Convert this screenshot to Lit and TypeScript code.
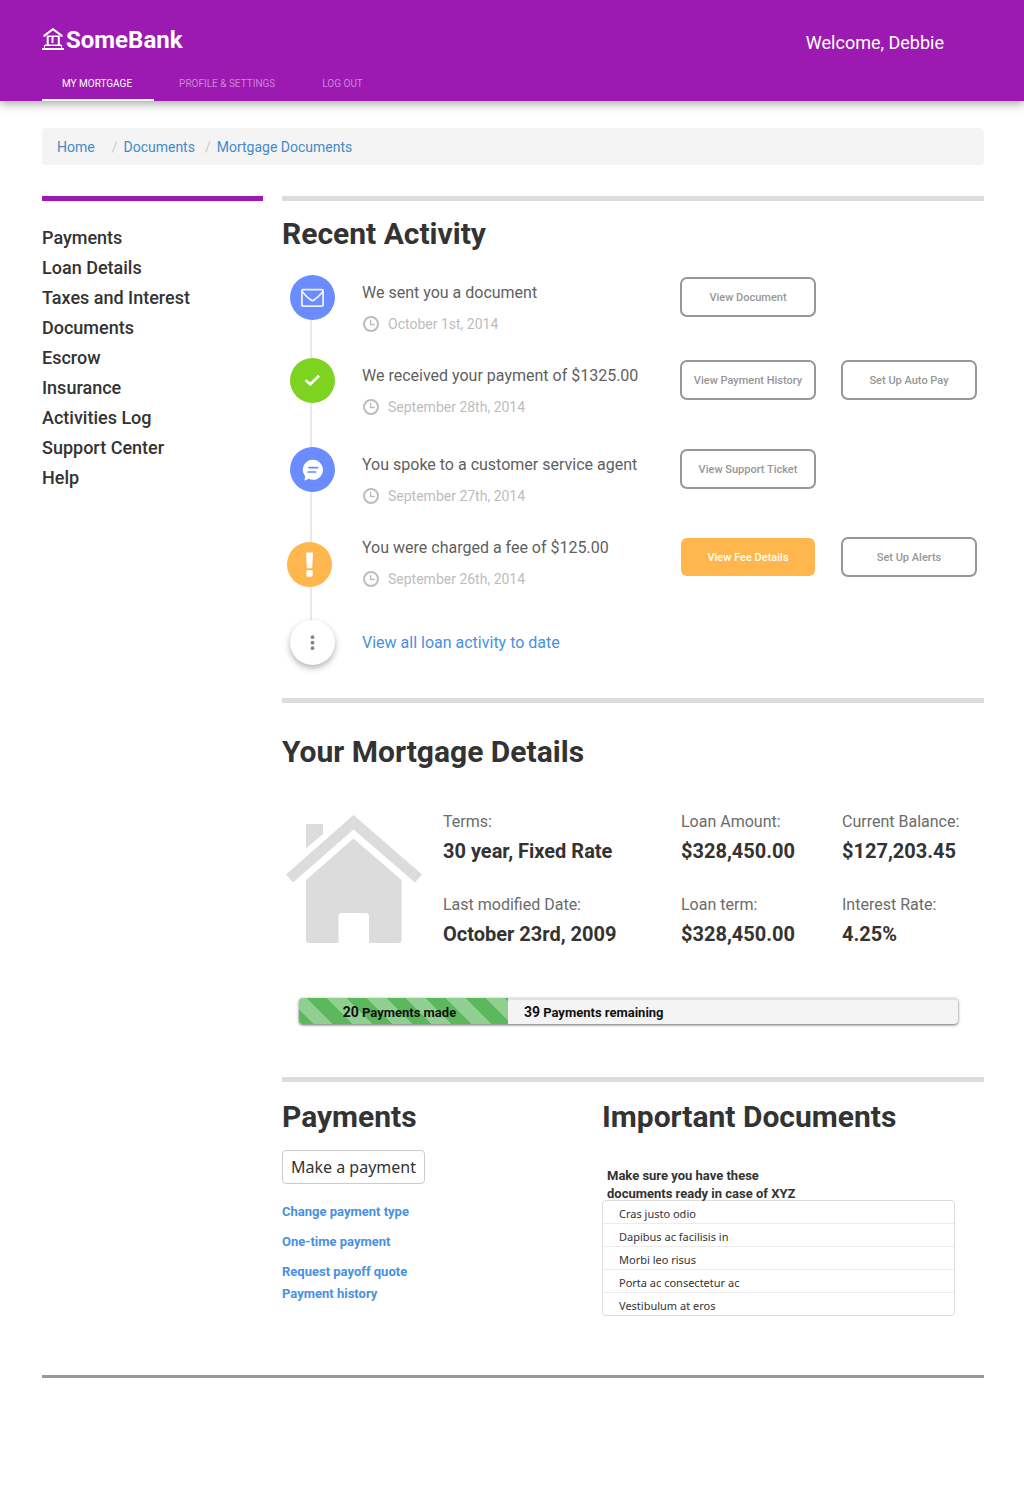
import { LitElement, html, css, svg, TemplateResult } from "lit";
import { customElement, property } from "lit/decorators.js";
import { classMap } from "lit/directives/class-map.js";

type Kind = "mail" | "check" | "chat" | "alert" | "more";

interface Activity {
  kind: Kind;
  title: string;
  date: string;
  actions: { label: string; primary?: boolean }[];
}

const activities: Activity[] = [
  { kind: "mail", title: "We sent you a document", date: "October 1st, 2014", actions: [{ label: "View Document" }] },
  {
    kind: "check",
    title: "We received your payment of $1325.00",
    date: "September 28th, 2014",
    actions: [{ label: "View Payment History" }, { label: "Set Up Auto Pay" }],
  },
  {
    kind: "chat",
    title: "You spoke to a customer service agent",
    date: "September 27th, 2014",
    actions: [{ label: "View Support Ticket" }],
  },
  {
    kind: "alert",
    title: "You were charged a fee of $125.00",
    date: "September 26th, 2014",
    actions: [{ label: "View Fee Details", primary: true }, { label: "Set Up Alerts" }],
  },
];

const sideLinks = [
  "Payments", "Loan Details", "Taxes and Interest", "Documents", "Escrow",
  "Insurance", "Activities Log", "Support Center", "Help",
];

const details = [
  ["Terms:", "30 year, Fixed Rate"],
  ["Loan Amount:", "$328,450.00"],
  ["Current Balance:", "$127,203.45"],
  ["Last modified Date:", "October 23rd, 2009"],
  ["Loan term:", "$328,450.00"],
  ["Interest Rate:", "4.25%"],
];

const documents = [
  "Cras justo odio", "Dapibus ac facilisis in", "Morbi leo risus",
  "Porta ac consectetur ac", "Vestibulum at eros",
];

const glyphs: Record<Kind, TemplateResult> = {
  mail: svg`<g fill="none" stroke="#fff" stroke-opacity=".88" stroke-width="1.800" stroke-linejoin="round"><rect x="11.900" y="14.700" width="21.200" height="16.400" rx="1.200"/><path d="M12 16.500c3 3.600 6 6.400 9 8.600 1 .7 2 .7 3 0 3-2.200 6-5 9-8.600"/></g>`,
  check: svg`<path d="M15.600 22l4.600 4.400 8.800-8.600" fill="none" stroke="#fff" stroke-width="2.800"/>`,
  chat: svg`<path d="M23 12.800a10 10 0 1 1-4.600 18.900c-1.400.9-3 1.600-4.400 1.600.9-1.100 1.300-2.600 1-4.300A10 10 0 0 1 23 12.800z" fill="#fff"/><path d="M19 20.600h8.600M18 25h7.600" stroke="#6b8cff" stroke-width="1.700" stroke-linecap="round"/>`,
  alert: svg`<path d="M19 10.400h7l-.8 15.800h-5.400z" fill="#fff"/><rect x="19.400" y="28.200" width="6.200" height="6.600" rx="1" fill="#fff"/>`,
  more: svg`<g fill="#858585"><circle cx="22.500" cy="17.200" r="1.900"/><circle cx="22.500" cy="22.700" r="1.900"/><circle cx="22.500" cy="28.200" r="1.900"/></g>`,
};

@customElement("activity-badge")
export class ActivityBadge extends LitElement {
  @property() kind: Kind = "mail";

  static styles = css`
    :host { display: block; }
    .badge { display: block; width: 45px; height: 45px; border-radius: 50%; background: #6b8cff; }
    .check { background: #7ed321; }
    .alert { background: #ffb64d; }
    .more { background: #fff; box-shadow: 0 3px 6px rgba(0, 0, 0, 0.3); }
  `;

  render() {
    return html`<svg class="badge ${this.kind}" viewBox="0 0 45 45" aria-hidden="true">${glyphs[this.kind]}</svg>`;
  }
}

@customElement("app-root")
export class AppRoot extends LitElement {
  @property({ type: Number }) made = 20;
  @property({ type: Number }) remaining = 39;
  @property({ type: Number }) progress = 31.7;

  static styles = css`
    :host { display: block; font-family: Roboto, "Liberation Sans", sans-serif; color: #333; background: #fff; }
    * { box-sizing: border-box; }
    ul, dl, dd, h1, h2, p { margin: 0; padding: 0; }
    ul { list-style: none; }
    a { color: inherit; text-decoration: none; }
    button { font-family: inherit; cursor: pointer; }

    .header {
      display: flex; flex-direction: column; justify-content: space-between;
      height: 101px; padding: 28px 80px 0 42px;
      background: #9c1ab1; color: #fff; box-shadow: 0 2px 10px rgba(0, 0, 0, 0.4);
    }
    .brand-row { display: flex; justify-content: space-between; align-items: flex-start; }
    .brand { display: flex; align-items: flex-start; gap: 2px; font-size: 24px; line-height: 24px; font-weight: 700; }
    .brand-icon { display: block; width: 22px; height: 22px; }
    .welcome { font-size: 18px; line-height: 30px; }
    .tabs { display: flex; gap: 5px; }
    .tab {
      display: block; padding: 0 22px 8px 20px; border-bottom: 2px solid transparent;
      font-size: 10px; line-height: 14px; color: #cb86d6;
    }
    .tab-active { color: #fff; border-color: #fff; }

    .page { padding: 27px 40px 0 42px; }
    .crumbs {
      display: flex; padding: 1px 15px 0; border-radius: 4px; background: #f4f4f4;
      font-size: 14px; line-height: 36px; color: #428bca;
    }
    .crumb:first-child { padding-right: 7px; }
    .crumb + .crumb::before { content: "/"; padding: 0 6px 0 10px; color: #ccc; }

    .columns { display: grid; grid-template-columns: 221px minmax(0, 1fr); gap: 19px; margin-top: 31px; align-items: start; }
    .side { border-top: 5px solid #9c1ab1; padding-top: 22px; font-size: 18px; line-height: 30px; font-weight: 500; }
    .side-link { display: block; }

    .section { border-top: 5px solid #dcdcdc; }
    .title { font-size: 30px; line-height: 36px; font-weight: 700; }

    .recent { padding: 15px 0 33px; }
    .timeline {
      display: grid; grid-template-rows: 83px 89px 88px 85px auto; margin-top: 23px; padding-left: 5px;
      background: linear-gradient(#e8e8e8, #e8e8e8) 28px 20px / 2px calc(100% - 40px) no-repeat;
    }
    .event { display: grid; grid-template-columns: 51px minmax(0, 1fr) 304px; column-gap: 24px; align-self: start; }
    .marker { justify-self: center; align-self: start; }
    .event-text { padding-top: 8px; }
    .event-alert .marker { justify-self: start; align-self: center; }
    .event-alert .event-text { padding: 3px 0 4px; }
    .event-title { font-size: 16px; line-height: 20px; color: #5f5f5f; white-space: nowrap; }
    .event-date {
      display: flex; align-items: center; gap: 8px; margin-top: 11px;
      font-size: 14px; line-height: 20px; color: #bdbdbd;
    }
    .clock { display: block; width: 18px; height: 18px; }
    .actions { display: flex; gap: 25px; padding-top: 2px; }
    .action {
      width: 136px; height: 40px; padding: 0; border: 2px solid #979797; border-radius: 7px;
      background: #fff; color: #979797; font-size: 11px; font-weight: 500;
    }
    .action-primary { background: #ffb64d; background-clip: padding-box; border: 1px solid transparent; color: #fff; }
    .view-all { align-self: center; font-size: 16px; line-height: 20px; color: #4a90e2; }

    .mortgage { padding: 31px 0 53px; }
    .summary { display: flex; align-items: center; gap: 21px; margin-top: 42px; padding-left: 4px; }
    .house { flex: none; display: block; width: 136px; height: 128px; fill: #dcdcdc; }
    .facts { flex: 1; display: grid; grid-template-columns: 238fr 161fr 142fr; row-gap: 32px; }
    .fact-label { font-size: 16px; line-height: 20px; color: #6b6b6b; }
    .fact-value { margin-top: 7px; font-size: 20px; line-height: 24px; font-weight: 700; }
    .progress {
      display: flex; height: 26px; margin: 52px 26px 0 17px; border-radius: 4px; overflow: hidden;
      background: #f4f4f4; color: #111; font-size: 13px; line-height: 28px; font-weight: 700;
      box-shadow: 0 1px 3px rgba(0, 0, 0, 0.6);
    }
    .progress-made {
      padding-right: 8px; text-align: center;
      background: repeating-linear-gradient(45deg, #5cb85c 0 10px, #8fcf8f 10px 24px, #5cb85c 24px 28px);
    }
    .progress-left { flex: 1; padding-left: 16px; box-shadow: inset 0 2px 1px rgba(0, 0, 0, 0.08); }
    .count { font-size: 14px; }

    .lower { display: grid; grid-template-columns: 320fr 382fr; padding-top: 17px; }
    .pay {
      display: block; height: 34px; margin-top: 15px; padding: 0 8px; border: 1px solid #ccc; border-radius: 4px;
      background: #fff; color: #333; font: 16px/30px "Noto Sans", "Open Sans", sans-serif;
    }
    .pay-links { display: grid; gap: 10px; margin-top: 18px; font-size: 13px; line-height: 20px; font-weight: 700; color: #4a90e2; }
    .pay-links .sub { display: block; margin-top: 2px; }
    .doc-note { margin-top: 32px; padding-left: 5px; font-size: 13px; line-height: 18px; font-weight: 700; }
    .docs { margin: -3px 29px 0 0; border: 1px solid #dcdcdc; border-radius: 4px; font: 11px/18px "Noto Sans", "Open Sans", sans-serif; }
    .doc { padding: 4px 16px 0; }
    .doc + .doc { border-top: 1px solid #ececec; }

    .footer { margin-top: 59px; border-top: 3px solid #979797; }
  `;

  private renderEvent(item: Activity) {
    return html`
      <li class=${classMap({ event: true, "event-alert": item.kind === "alert" })}>
        <activity-badge class="marker" .kind=${item.kind}></activity-badge>
        <div class="event-text">
          <p class="event-title">${item.title}</p>
          <p class="event-date">
            <svg class="clock" viewBox="0 0 18 18" fill="none" stroke="#bdbdbd" aria-hidden="true">
              <circle cx="9" cy="9" r="7" stroke-width="2" /><path d="M8.600 4.800v4.700h4.200" stroke-width="1.400" />
            </svg>
            ${item.date}
          </p>
        </div>
        <div class="actions">
          ${item.actions.map((a) => html`<button class="action ${a.primary ? "action-primary" : ""}">${a.label}</button>`)}
        </div>
      </li>
    `;
  }

  render() {
    return html`
      <header class="header">
        <div class="brand-row">
          <h1 class="brand">
            <svg class="brand-icon" viewBox="0 0 22 22" fill="none" stroke="#fff" aria-hidden="true">
              <path d="M2.400 8.800V7.600L11 1.200l8.600 6.400v1.200" stroke-width="2" />
              <path d="M5 8.200h12.500M3 17.300h16.500" stroke-width="1.600" />
              <path d="M5.700 8v9M16.800 8v9" stroke-width="2" />
              <path d="M10.500 8v7" stroke-width="2" />
              <path d="M2.500 19.800V17M19.500 19.800V17" stroke-width="1" />
              <path d="M0 21h22" stroke-width="2" />
            </svg>
            SomeBank
          </h1>
          <span class="welcome">Welcome, Debbie</span>
        </div>
        <nav class="tabs">
          <a class="tab tab-active" href="#mortgage">MY MORTGAGE</a>
          <a class="tab" href="#profile">PROFILE &amp; SETTINGS</a>
          <a class="tab" href="#logout">LOG OUT</a>
        </nav>
      </header>

      <div class="page">
        <nav>
          <ul class="crumbs">
            ${["Home", "Documents", "Mortgage Documents"].map((c) => html`<li class="crumb"><a href="#">${c}</a></li>`)}
          </ul>
        </nav>

        <div class="columns">
          <nav class="side">${sideLinks.map((s) => html`<a class="side-link" href="#">${s}</a>`)}</nav>

          <main>
            <section class="section recent">
              <h2 class="title">Recent Activity</h2>
              <ul class="timeline">
                ${activities.map((a) => this.renderEvent(a))}
                <li class="event">
                  <activity-badge class="marker" .kind=${"more" as Kind}></activity-badge>
                  <a class="view-all" href="#">View all loan activity to date</a>
                </li>
              </ul>
            </section>

            <section class="section mortgage">
              <h2 class="title">Your Mortgage Details</h2>
              <div class="summary">
                <svg class="house" viewBox="0 0 136 128" aria-hidden="true">
                  <path d="M67.500 0L136 59.500l-7 8L67.500 14.500 7 67.500 0 59.500z" />
                  <path d="M20 9h17v10L20 33.500z" />
                  <path d="M67.500 23.500L115.500 65v60q0 3-3 3H83v-27q0-3-3-3H55.500q-3 0-3 3v27H23q-3 0-3-3V65z" />
                </svg>
                <dl class="facts">
                  ${details.map(
                    ([label, value]) => html`<div><dt class="fact-label">${label}</dt><dd class="fact-value">${value}</dd></div>`,
                  )}
                </dl>
              </div>
              <div class="progress">
                <div class="progress-made" style="width: ${this.progress}%"><span class="count">${this.made}</span> Payments made</div>
                <div class="progress-left"><span class="count">${this.remaining}</span> Payments remaining</div>
              </div>
            </section>

            <section class="section lower">
              <div>
                <h2 class="title">Payments</h2>
                <button class="pay">Make a payment</button>
                <ul class="pay-links">
                  <li><a href="#">Change payment type</a></li>
                  <li><a href="#">One-time payment</a></li>
                  <li><a href="#">Request payoff quote</a><a class="sub" href="#">Payment history</a></li>
                </ul>
              </div>
              <div>
                <h2 class="title">Important Documents</h2>
                <p class="doc-note">Make sure you have these<br />documents ready in case of XYZ</p>
                <ul class="docs">${documents.map((d) => html`<li class="doc">${d}</li>`)}</ul>
              </div>
            </section>
          </main>
        </div>
        <footer class="footer"></footer>
      </div>
    `;
  }
}
